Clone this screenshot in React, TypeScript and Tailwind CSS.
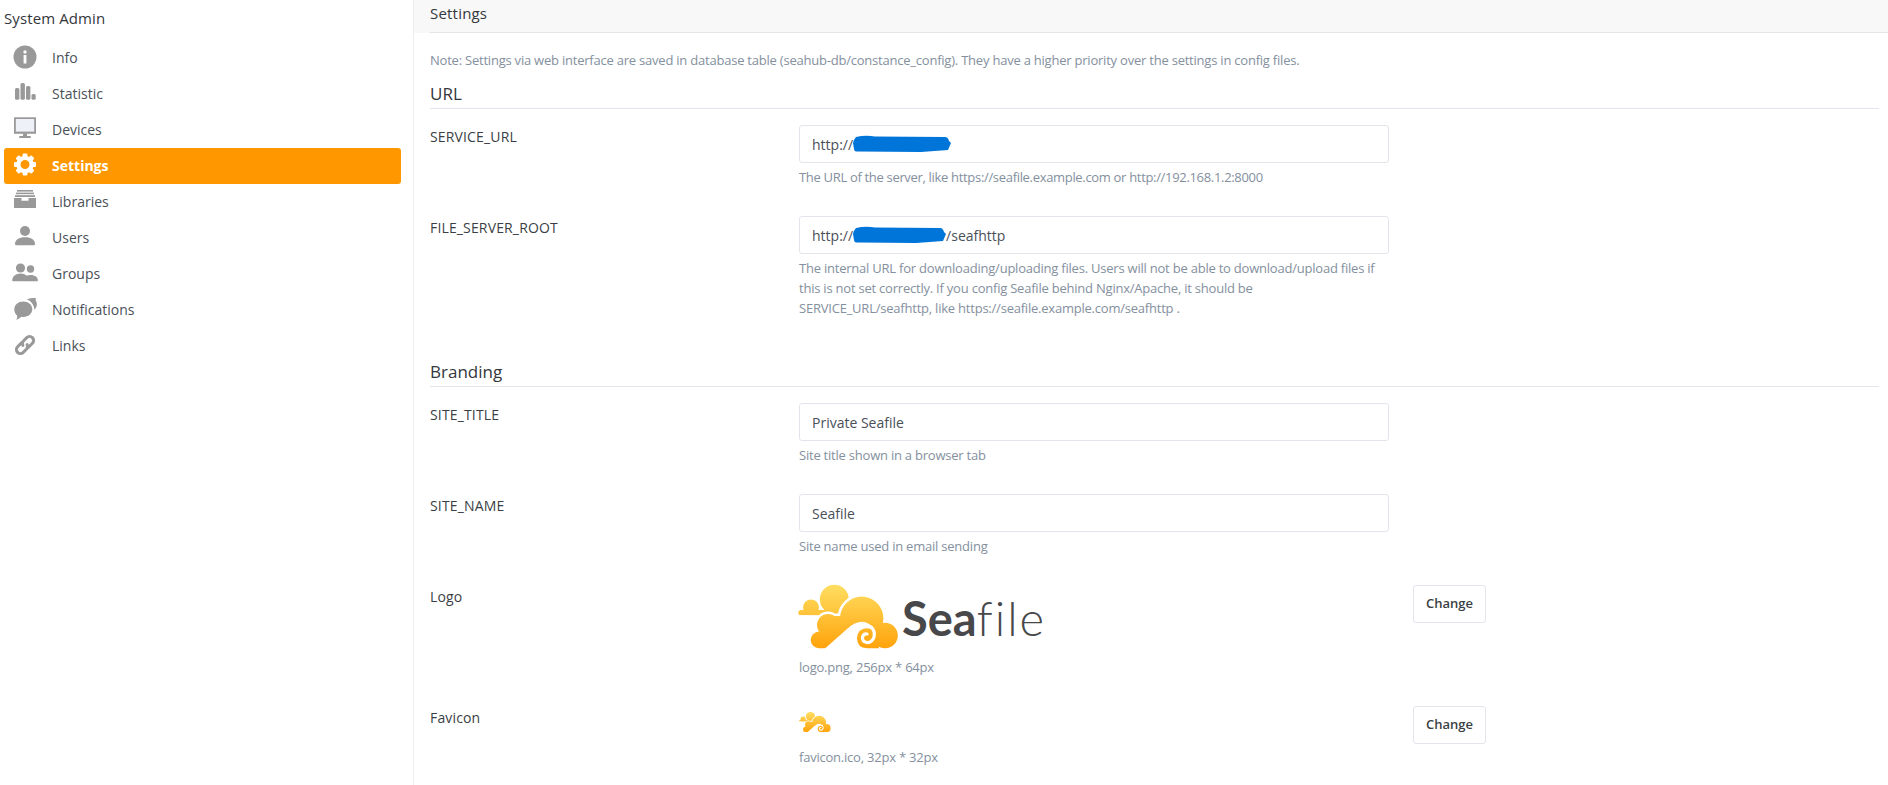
import React from 'react';

const GREY = '#999999';

const InfoIcon = () => (
  <svg width="26" height="26" viewBox="0 0 26 26">
    <circle cx="13" cy="13" r="11.5" fill={GREY} />
    <circle cx="13" cy="8" r="1.7" fill="#fff" />
    <rect x="11.6" y="11" width="2.8" height="8.5" fill="#fff" />
  </svg>
);

const StatIcon = () => (
  <svg width="26" height="26" viewBox="0 0 26 26" fill={GREY}>
    <rect x="3" y="8" width="4.4" height="11.7" rx="1.5" />
    <rect x="8.5" y="3" width="4.4" height="16.7" rx="1.5" />
    <rect x="14" y="6" width="4.4" height="13.7" rx="1.5" />
    <rect x="19.5" y="14" width="4.2" height="5.7" rx="1.5" />
  </svg>
);

const DeviceIcon = () => (
  <svg width="26" height="26" viewBox="0 0 26 26">
    <rect x="2" y="1.3" width="22" height="16.5" fill={GREY} />
    <rect x="3.8" y="3" width="18.4" height="12.6" fill="#eef1f7" />
    <rect x="11" y="17.5" width="4" height="3.5" fill={GREY} />
    <rect x="7" y="20" width="12" height="2" rx="1" fill={GREY} />
  </svg>
);

const GearIcon = () => (
  <svg width="26" height="26" viewBox="0 0 26 26">
    <g fill="#fff">
      {[0, 45, 90, 135, 180, 225, 270, 315].map(a => (
        <rect key={a} x="10.6" y="1.5" width="4.8" height="5" rx="1" transform={`rotate(${a} 13 12.5)`} />
      ))}
    </g>
    <circle cx="13" cy="12.5" r="6.6" fill="none" stroke="#fff" strokeWidth="4.2" />
  </svg>
);

const ArchiveIcon = () => (
  <svg width="26" height="26" viewBox="0 0 26 26" fill={GREY}>
    <rect x="5" y="2" width="16" height="1.6" />
    <rect x="4" y="4.6" width="18" height="1.6" />
    <rect x="3" y="7.2" width="20" height="1.8" />
    <path d="M2 10h7.500v2.800h7V10H24v10H2z" />
  </svg>
);

const UserIcon = () => (
  <svg width="26" height="26" viewBox="0 0 26 26" fill={GREY}>
    <circle cx="13" cy="7" r="5" />
    <path d="M4 21.200c-.8 0-1-.6-1-1.400 0-4 4-6.600 10-6.600s10 2.600 10 6.600c0 .8-.2 1.400-1 1.400z" />
  </svg>
);

const GroupIcon = () => (
  <svg width="26" height="26" viewBox="0 0 26 26" fill={GREY}>
    <circle cx="18.500" cy="9" r="3.700" />
    <path d="M15 21.300h10c.7 0 .9-.5.9-1 0-3-2.800-5.300-7.400-5.300-1.700 0-3.200.3-4.400 1 1.200 1.300 1.900 3.100 1.900 5.300z" />
    <circle cx="8.500" cy="8" r="4.600" />
    <path d="M1 21.300c-.5 0-.8-.4-.8-1 0-3.800 3.400-6.800 8.300-6.800s8.300 3 8.300 6.800c0 .6-.3 1-.8 1z" />
  </svg>
);

const CommentIcon = () => (
  <svg width="26" height="26" viewBox="0 0 26 26" fill={GREY}>
    <path d="M11.300 5.500c5 0 9 3.400 9 7.700s-4 7.700-9 7.700c-.8 0-1.500-.1-2.200-.2-1 1.300-2.800 2.500-5 3 .8-1 1.200-2.200 1.100-4C3.500 18.200 2.300 15.800 2.300 13.200c0-4.300 4-7.700 9-7.700z" />
    <path d="M15 3.400c2-.9 5-1.400 9-1.400-.5.8-.6 1.500-.3 2.300.8 1.200 1.200 2.500 1.200 3.900 0 2.100-.9 4-2.500 5.500C22.200 9 19.300 5 15 3.400z" />
  </svg>
);

const LinkIcon = () => (
  <svg width="26" height="26" viewBox="0 0 26 26" fill="none" stroke={GREY} strokeWidth="3" strokeLinecap="round">
    <g transform="rotate(-45 13 13)">
      <path d="M12 9H6.500a4 4 0 0 0 0 8H11a4 4 0 0 0 3.800-2.800" />
      <path d="M14 17h5.500a4 4 0 0 0 0-8H15a4 4 0 0 0-3.800 2.800" />
    </g>
  </svg>
);

// cloud mark, drawn in px measured from the logo's top-left corner
const Cloud = () => (
  <g>
    <defs>
      <linearGradient id="seaGrad" gradientUnits="userSpaceOnUse" x1="0" y1="4" x2="0" y2="68">
        <stop offset="0" stopColor="#ffdf63" />
        <stop offset="1" stopColor="#ffa30b" />
      </linearGradient>
    </defs>
    <g fill="url(#seaGrad)">
      <circle cx="39.300" cy="19.300" r="14.500" />
      <circle cx="16" cy="27.500" r="8" />
      <path d="M6 30h34v5.300H6a2.650 2.650 0 0 1 0-5.300z" />
    </g>
    <g fill="#fff" stroke="#fff" strokeWidth="5">
      <circle cx="66.700" cy="38.300" r="21.700" />
      <circle cx="33" cy="45" r="11" />
      <rect x="24" y="42" width="30" height="20" />
    </g>
    <rect x="0" y="35.300" width="22" height="10" fill="#fff" />
    <g fill="url(#seaGrad)">
      <circle cx="66.700" cy="38.300" r="21.700" />
      <circle cx="33" cy="45" r="11" />
      <circle cx="24" cy="60" r="8.300" />
      <path d="M22 51.700h40v16.600H24z" />
      <rect x="40" y="36" width="30" height="24" />
    </g>
    <path d="M26 72 L52 49 Q60 41.500 68 41.800 Q76 43 81 51 L 76 72 Z" fill="#fff" />
    <g fill="url(#seaGrad)">
      <circle cx="90" cy="55.500" r="12.800" />
      <path d="M72 68.300 Q62 68 62 58 Q62.500 49 71 48.200 Q77 48 81 51 L84 68.300 Z" />
    </g>
    <path d="M76 47 Q80.500 51 79 57 Q77 63 71.500 62.500 Q67 61.500 67.500 57 Q68.500 53.500 72 54" fill="none" stroke="#fff" strokeWidth="3.200" strokeLinecap="round" />
  </g>
);

const Redaction = ({ width }: { width: number }) => (
  <svg width={width} height="18" viewBox={`0 0 ${width} 18`} className="shrink-0">
    <path
      d={`M3 2 Q12 0 22 1.500 L${width - 6} 2 Q${width - 3} 2 ${width - 2} 6 L${width} 8 L${width - 3} 15 L${width - 30} 17 L6 16.500 Q1 17 1 14 L0 8 Q1 4 3 2z`}
      fill="#0075d9"
    />
  </svg>
);

const navItems = [
  { label: 'Info', icon: <InfoIcon /> },
  { label: 'Statistic', icon: <StatIcon /> },
  { label: 'Devices', icon: <DeviceIcon /> },
  { label: 'Settings', icon: <GearIcon />, active: true },
  { label: 'Libraries', icon: <ArchiveIcon /> },
  { label: 'Users', icon: <UserIcon /> },
  { label: 'Groups', icon: <GroupIcon /> },
  { label: 'Notifications', icon: <CommentIcon /> },
  { label: 'Links', icon: <LinkIcon /> },
];

const Field = ({ children }: { children: React.ReactNode }) => (
  <div className="flex items-center h-[38px] px-3 border border-[#e2e5ec] rounded-[3px] bg-white text-[14px] text-[#4a5058]">
    {children}
  </div>
);

const Help = ({ children }: { children: React.ReactNode }) => (
  <p className="pr-2 text-[13px] leading-5 text-[#84909e] tracking-[-0.22px]">{children}</p>
);

const Row = ({ label, children, action }: { label: string; children: React.ReactNode; action?: boolean }) => (
  <div className="flex mb-[29px]">
    <div className="w-[369px] shrink-0 pt-[2px] text-[14px] leading-5 text-[#3b3f45] tracking-[0.15px]">{label}</div>
    <div className="w-[590px] shrink-0">{children}</div>
    {action && (
      <button className="ml-6 w-[73px] h-[38px] border border-[#e2e5ec] rounded-[3px] bg-white text-[13px] font-semibold text-[#3b3f45]">
        Change
      </button>
    )}
  </div>
);

const SectionTitle = ({ children }: { children: React.ReactNode }) => (
  <h3 className="h-[26px] mb-4 border-b border-[#e2e5ec] text-[17px] leading-[22px] text-[#33373c]">{children}</h3>
);

export default function App() {
  return (
    <div className="flex h-screen overflow-hidden bg-white font-['Open_Sans',sans-serif]">
      <aside className="w-[414px] shrink-0 border-r border-[#eeeeee] pl-1 pr-3">
        <div className="h-10 pt-2 text-[15px] leading-5 text-[#33373c] tracking-[0.1px]">System Admin</div>
        <nav className="flex flex-col">
          {navItems.map(item => (
            <a
              key={item.label}
              className={`flex items-center h-9 pl-2 pb-[2px] rounded-[3px] text-[14px] ${
                item.active ? 'bg-[#ff9800] text-white font-bold' : 'text-[#4a5058]'
              }`}
            >
              <span className="mr-[14px] flex w-[26px]">{item.icon}</span>
              {item.label}
            </a>
          ))}
        </nav>
      </aside>
      <main className="flex-1 min-w-0">
        <div className="h-[33px] pl-4 bg-[#f8f8f8]">
          <div className="h-full border-b border-[#e5e5e5] pt-[3px] text-[15px] leading-5 text-[#33373c] tracking-[0.2px]">
            Settings
          </div>
        </div>
        <div className="pl-4 pr-[9px]">
          <p className="mt-[17px] mb-[13px] text-[13px] leading-5 text-[#84909e] tracking-[-0.22px]">
            Note: Settings via web interface are saved in database table (seahub-db/constance_config). They have a higher priority over the settings in config files.
          </p>
          <SectionTitle>URL</SectionTitle>
          <Row label="SERVICE_URL">
            <Field>
              <span>http://</span>
              <Redaction width={98} />
            </Field>
            <div className="mt-1">
              <p className="text-[13px] leading-5 text-[#84909e] tracking-[-0.32px]">
                The URL of the server, like https://seafile.example.com or http://192.168.1.2:8000
              </p>
            </div>
          </Row>
          <Row label="FILE_SERVER_ROOT">
            <Field>
              <span>http://</span>
              <Redaction width={93} />
              <span>/seafhttp</span>
            </Field>
            <div className="mt-1">
              <Help>
                The internal URL for downloading/uploading files. Users will not be able to download/upload files if this is not set correctly. If you config Seafile behind Nginx/Apache, it should be SERVICE_URL/seafhttp, like https://seafile.example.com/seafhttp .
              </Help>
            </div>
          </Row>
          <div className="mt-[43px]">
            <SectionTitle>Branding</SectionTitle>
          </div>
          <Row label="SITE_TITLE">
            <Field>Private Seafile</Field>
            <div className="mt-1">
              <Help>Site title shown in a browser tab</Help>
            </div>
          </Row>
          <Row label="SITE_NAME">
            <Field>Seafile</Field>
            <div className="mt-1">
              <Help>Site name used in email sending</Help>
            </div>
          </Row>
          <Row label="Logo" action>
            <svg width="260" height="65" viewBox="0 0 260 65" className="block -ml-1 overflow-visible">
              <g transform="translate(0,-5)">
                <Cloud />
              </g>
              <text x="107" y="51" fontFamily="Lato, sans-serif" fontSize="47" fill="#48484a">
                <tspan fontWeight="700">Sea</tspan>
                <tspan fontWeight="300" letterSpacing="2">file</tspan>
              </text>
            </svg>
            <div className="mt-[7px]">
              <Help>logo.png, 256px * 64px</Help>
            </div>
          </Row>
          <Row label="Favicon" action>
            <div className="h-[36px] pt-[6px]">
              <svg width="32" height="20" viewBox="4 5 99 63" className="block">
                <Cloud />
              </svg>
            </div>
            <div className="mt-[5px]">
              <Help>favicon.ico, 32px * 32px</Help>
            </div>
          </Row>
        </div>
      </main>
    </div>
  );
}
